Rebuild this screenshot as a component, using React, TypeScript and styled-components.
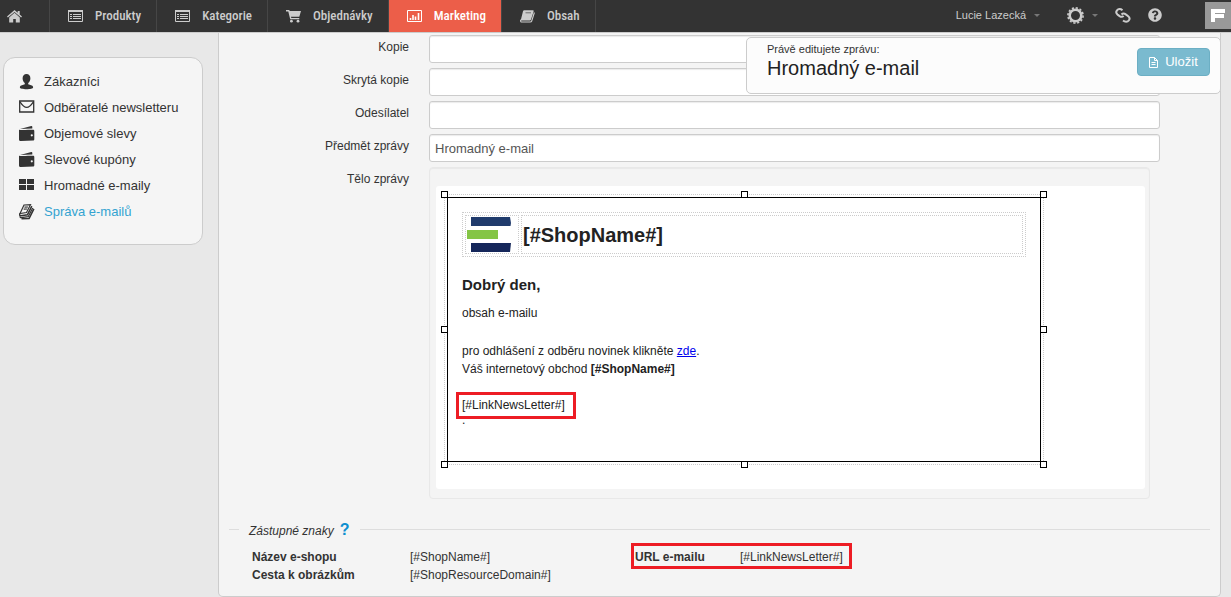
import React from "react";
import styled, { createGlobalStyle, css } from "styled-components";
import { FaQuestionCircle } from "react-icons/fa";

const GlobalStyle = createGlobalStyle`
  *, *::before, *::after { box-sizing: border-box; }
  body {
    margin: 0;
    background: #e8e8e8;
    color: #333;
    font: 12px/18px "Liberation Sans", Arial, sans-serif;
  }
`;

/* ---------- top bar ---------- */

const TopBar = styled.header`
  display: flex;
  height: 33px;
  background: #333;
  border-bottom: 1px solid #ccc;
  color: #ccc;
`;

const Nav = styled.nav`
  display: flex;
`;

const NavLink = styled.a<{ $active?: boolean; $home?: boolean }>`
  display: flex;
  align-items: center;
  gap: 12px;
  padding: ${(p) => (p.$home ? "0 27px 0 7px" : "0 15px 0 18px")};
  border-right: 1px solid #464646;
  background: ${(p) => (p.$active ? "#ec5e49" : "transparent")};
  color: ${(p) => (p.$active ? "#fff" : "#ccc")};
  font: 500 13px/30px "Roboto Condensed", "Liberation Sans Narrow", "Liberation Sans", sans-serif;
  text-decoration: none;
  white-space: nowrap;
  svg { flex: none; }
`;

const Tools = styled.div`
  display: flex;
  align-items: center;
  margin-left: auto;
  padding-bottom: 2px;
`;

const ToolButton = styled.button<{ $gap: number }>`
  display: flex;
  align-items: center;
  gap: 8px;
  margin: 0 ${(p) => p.$gap}px 0 0;
  padding: 0;
  border: 0;
  background: none;
  color: #ccc;
  font: 11px/18px "Liberation Sans", Arial, sans-serif;
  white-space: nowrap;
`;

const Caret = styled.span`
  border: 3px solid transparent;
  border-top-color: #777;
  border-bottom: 0;
`;

/* ---------- page columns ---------- */

const Columns = styled.div`
  display: flex;
  align-items: stretch;
  padding-right: 10px;
`;

const Sidebar = styled.aside`
  flex: none;
  width: 218px;
  padding: 24px 15px 0 3px;
`;

const SideMenu = styled.ul`
  margin: 0;
  padding: 11px 15px 19px;
  border: 1px solid #ccc;
  border-radius: 12px;
  background: #f5f5f5;
  list-style: none;
`;

const SideLink = styled.a<{ $active?: boolean }>`
  display: flex;
  align-items: center;
  gap: 9px;
  height: 26px;
  color: ${(p) => (p.$active ? "#33a3d1" : "#333")};
  font-size: 13px;
  text-decoration: none;
  white-space: nowrap;
  svg { color: #333; flex: none; }
`;

const Main = styled.main`
  flex: 1;
  min-width: 0;
  padding: 2px 0 12px;
  border: 1px solid #ccc;
  border-top: 0;
  border-radius: 0 0 5px 5px;
  background: #f4f4f4;
`;

/* ---------- form ---------- */

const Row = styled.div`
  display: flex;
  align-items: flex-start;
  gap: 20px;
  margin-bottom: 5px;
  padding-right: 60px;
`;

const Label = styled.label`
  flex: none;
  width: 190px;
  padding-top: 3px;
  text-align: right;
`;

const Input = styled.input`
  flex: 1;
  min-width: 0;
  height: 28px;
  padding: 0 5px;
  border: 1px solid #ccc;
  border-radius: 3px;
  background: #fff;
  box-shadow: inset 0 1px 1px rgba(0, 0, 0, 0.08);
  color: #555;
  font: 13px/18px "Liberation Sans", Arial, sans-serif;
`;

const Editor = styled.div`
  flex: 1;
  min-width: 0;
  margin-right: 10px;
  padding: 18px 4px 9px 6px;
  border: 1px solid #e8e8e8;
  border-radius: 4px;
  box-shadow: inset 0 1px 1px rgba(0, 0, 0, 0.05);
`;

const Canvas = styled.div`
  padding: 8px 8px 24px;
  border-radius: 3px;
  background: #fff;
`;

const Selection = styled.div`
  position: relative;
  width: 600px;
  padding: 2px;
  border: 1px dotted #ccc;
`;

const HandleLayer = styled.div`
  position: absolute;
  inset: -1px 0 0 -1px;
  pointer-events: none;
`;

const Handle = styled.i<{ $x: number; $y: number }>`
  position: absolute;
  left: ${(p) => p.$x}%;
  top: ${(p) => p.$y}%;
  width: 7px;
  height: 7px;
  margin: -3px 0 0 -3px;
  border: 1px solid #000;
  background: #fff;
`;

const Mail = styled.article`
  padding: 14px 14px 35px;
  border: 1px solid #000;
  color: #222;
`;

const MailHeader = styled.header`
  display: grid;
  grid-template-columns: 54px 1fr;
  gap: 2px;
  padding: 2px;
  border: 1px dotted #ccc;
`;

const MailCell = styled.div`
  display: flex;
  align-items: center;
  height: 39px;
  padding: 1px;
  border: 1px dotted #ccc;
  svg { display: block; }
`;

const ShopName = styled.h1`
  margin: 0;
  font-size: 20px;
  line-height: 32px;
`;

const Greeting = styled.h2`
  margin: 19px 0 10px;
  font-size: 15px;
  line-height: 18px;
`;

const Para = styled.p`
  margin: 0 0 20px;
`;

const Footer = styled(Para)`
  margin-bottom: 0;
`;

const Tail = styled(Footer)`
  line-height: 12px;
`;

const MailLink = styled.a`
  color: #00e;
`;

const frame = css`
  content: "";
  position: absolute;
  border: 3px solid #ed1c24;
`;

const Marked = styled.span`
  position: relative;
  display: inline-block;
  &::after { ${frame} inset: -4px -11px -5px -6px; }
`;

/* ---------- placeholders ---------- */

const Placeholders = styled.fieldset`
  margin: 20px 10px 0;
  padding: 8px 0 0 23px;
  border: 0;
  border-top: 1px solid #ddd;
`;

const Legend = styled.legend`
  margin-left: -13px;
  padding: 3px 10px 0;
  font-style: italic;
`;

const Help = styled.button`
  margin: 0 0 0 6px;
  padding: 0;
  border: 0;
  background: none;
  color: #0d8ecf;
  font: bold 16px/16px "Liberation Sans", Arial, sans-serif;
`;

const Table = styled.table`
  width: 100%;
  table-layout: fixed;
  border-collapse: collapse;
  text-align: left;
  th, td { padding: 0; }
`;

const Col = styled.col<{ $w?: number }>`
  width: ${(p) => (p.$w ? `${p.$w}px` : "auto")};
`;

const MarkedHead = styled.th`
  position: relative;
  &::after { ${frame} left: -4px; top: -5px; width: 221px; height: 26px; }
`;

/* ---------- floating save panel ---------- */

const SavePanel = styled.section`
  position: absolute;
  top: 37px;
  right: 10px;
  width: 475px;
  height: 57px;
  display: flex;
  align-items: flex-start;
  justify-content: space-between;
  padding: 2px 10px 0 20px;
  border: 1px solid #ccc;
  border-radius: 5px;
  background: #fcfcfc;
`;

const Editing = styled.div`
  font-size: 11px;
`;

const EditingTitle = styled.div`
  color: #222;
  font-size: 20px;
  line-height: 20px;
`;

const SaveButton = styled.button`
  display: flex;
  align-items: center;
  justify-content: center;
  gap: 7px;
  width: 73px;
  height: 28px;
  margin-top: 8px;
  padding: 0;
  border: 1px solid #6cafc4;
  border-radius: 4px;
  background: #7abacf;
  color: #fff;
  font: 13px/18px "Liberation Sans", Arial, sans-serif;
`;

/* ---------- icons ---------- */

const HomeIcon = () => (
  <svg width="15" height="13" viewBox="0 0 15 13" fill="currentColor">
    <path d="M7.5 0 0 6.6l.9 1L7.5 2l6.6 5.6.9-1-2.3-2V1h-2v1.8z" />
    <path d="M7.5 2.8 2.2 7.4V12.5h4V9h2.6v3.5h4V7.4z" />
  </svg>
);

const ListIcon = () => (
  <svg width="15" height="13" viewBox="0 0 15 13" fill="none" stroke="currentColor">
    <path d="M.5.5h14v11H.5z" />
    <path d="M0 1h15" strokeWidth="2" />
    <path d="M2 4.5h2M5 4.5h8M2 6.5h2M5 6.5h8M2 8.5h2M5 8.5h8" />
  </svg>
);

const CartIcon = () => (
  <svg width="15" height="13" viewBox="0 0 15 13" fill="currentColor">
    <path d="M0 0h3.3l.4 1H15L13.3 6.8H5l.3 1.2h8v1.2H4.2L2.3 1.5H0z" />
    <circle cx="5.4" cy="11.2" r="1.4" />
    <circle cx="12" cy="11.2" r="1.4" />
  </svg>
);

const ChartIcon = () => (
  <svg width="15" height="13" viewBox="0 0 15 13" fill="none" stroke="currentColor">
    <path d="M.5.5h14v11H.5z" />
    <path d="M3.5 10V8M6 10V5M8.5 10V6.5M11.5 10V3" strokeWidth="1.6" />
  </svg>
);

const BookIcon = () => (
  <svg width="15" height="13" viewBox="0 0 15 13" fill="none">
    <path
      d="M4.2.3h8.6c.7 0 1 .5.8 1.1L11 9.4c-.2.6-.7 1-1.3 1H.7L3 1.2C3.2.6 3.6.3 4.2.3z"
      fill="currentColor"
    />
    <path d="M.8 9.8c-.5 1.3 0 2.2 1 2.2h8.4c.8 0 1.3-.4 1.5-1l2.7-8.5" stroke="currentColor" strokeWidth="1.1" />
    <path d="M5.5 2.8H11" stroke="#555" strokeWidth=".8" />
  </svg>
);

const GearIcon = () => (
  <svg width="17" height="17" viewBox="0 0 17 17" fill="none" stroke="currentColor">
    <circle cx="8.5" cy="8.5" r="5.8" strokeWidth="2.6" />
    <circle cx="8.5" cy="8.5" r="7.6" strokeWidth="1.6" strokeDasharray="2.2 1.78" />
  </svg>
);

const ChainIcon = () => (
  <svg width="16" height="15" viewBox="0 0 16 15" fill="none" stroke="currentColor" strokeWidth="2">
    <path d="M7.5 2.3C5.5.6 3.2.8 2 2.3c-1.2 1.6-.8 3.2.6 4.3l2 1.5c1.5 1 3 .8 4-.3" />
    <path d="M8 12.5c2 1.7 4.6 1.6 5.8 0 1.2-1.6.8-3.2-.6-4.3l-2.4-1.8C9.3 5.2 7.5 5.4 6.5 6.5" />
  </svg>
);

const BrandMark = styled.svg`
  align-self: flex-start;
  margin-top: 2px;
  background: #999;
`;

const UserIcon = () => (
  <svg width="16" height="16" viewBox="0 0 16 16" fill="currentColor">
    <path d="M7.5 0c2.4 0 3.9 1.7 3.9 4.2 0 2-.9 3.8-2.2 4.8v1.2l3.6 1.4c.9.4 1.3 1 1.3 2 0 1.2-3 1.7-6.6 1.7s-6.6-.5-6.6-1.7c0-1 .4-1.6 1.3-2l3.6-1.4V9C4.5 8 3.6 6.2 3.6 4.2 3.6 1.7 5.1 0 7.5 0z" />
  </svg>
);

const MailIcon = () => (
  <svg width="16" height="16" viewBox="0 0 16 16" fill="none" stroke="currentColor" strokeWidth="1.3">
    <path d="M.7 1h14v11H.7z" />
    <path d="M1 1.8c2 3 4.5 5.5 6.7 5.5s4.7-2.5 6.7-5.5" />
  </svg>
);

const WalletIcon = () => (
  <svg width="16" height="16" viewBox="0 0 16 16" fill="currentColor">
    <path d="M1 3 12.3.1c.6-.1 1 .1 1 .8v1.6z" />
    <path
      fillRule="evenodd"
      d="M0 3.8c3 .4 9 0 14 0 .9 0 1.3.4 1.3 1.2v8.2c0 .9-.5 1.3-1.3 1.3L2 15.1c-1.2 0-2-.6-2-1.6zM12.8 8.2a1.1 1.1 0 1 0 0 2.2 1.1 1.1 0 0 0 0-2.2z"
    />
  </svg>
);

const GridIcon = () => (
  <svg width="16" height="16" viewBox="0 0 16 16" fill="currentColor">
    <path d="M0 1h7v5H0zM8 1h7v5H8zM0 7h7v5H0zM8 7h7v5H8z" />
  </svg>
);

const BooksIcon = () => (
  <svg width="16" height="16" viewBox="0 0 16 16" fill="none" stroke="currentColor" strokeWidth="1.2">
    <path d="M5 1 11.5.7 7.5 8.5 1 9.5z" />
    <path d="M5.5 3.2 9 3M4.7 5.2 8.2 5" />
    <path d="M.8 9.5c-.5 1.5 0 2.3 1 2.2l6.7-1L12.8 2.2" strokeWidth="1.5" />
    <path d="M1 12.2c0 1 .5 1.6 1.3 1.5l6.9-1 4.5-8.8" />
    <path d="M2.5 14.8l7.6-.4L14.9 4.8" strokeWidth="1.5" />
  </svg>
);

const FileIcon = () => (
  <svg width="9" height="11" viewBox="0 0 9 11" fill="none" stroke="currentColor">
    <path d="M.5.5h5l3 3v7h-8zM5.5.5v3h3M2.5 5.5h4M2.5 7.5h4" />
  </svg>
);

const ShopLogo = () => (
  <svg width="45" height="35" viewBox="0 0 45 35">
    <path d="M4 0h39l1 6-.5 3H4z" fill="#203b6c" />
    <path d="M0 13h31v9H0z" fill="#84c546" />
    <path d="M4 26h40l-1 9H4z" fill="#15275a" />
  </svg>
);

/* ---------- data ---------- */

const navItems = [
  { text: "Produkty", Icon: ListIcon },
  { text: "Kategorie", Icon: ListIcon },
  { text: "Objednávky", Icon: CartIcon },
  { text: "Marketing", Icon: ChartIcon, active: true },
  { text: "Obsah", Icon: BookIcon },
];

const sideItems = [
  { text: "Zákazníci", Icon: UserIcon },
  { text: "Odběratelé newsletteru", Icon: MailIcon },
  { text: "Objemové slevy", Icon: WalletIcon },
  { text: "Slevové kupóny", Icon: WalletIcon },
  { text: "Hromadné e-maily", Icon: GridIcon },
  { text: "Správa e-mailů", Icon: BooksIcon, active: true },
];

const fields = [
  { id: "cc", label: "Kopie", value: "" },
  { id: "bcc", label: "Skrytá kopie", value: "" },
  { id: "sender", label: "Odesílatel", value: "" },
  { id: "subject", label: "Předmět zprávy", value: "Hromadný e-mail" },
];

const handles: [number, number][] = [
  [0, 0], [50, 0], [100, 0], [0, 50], [100, 50], [0, 100], [50, 100], [100, 100],
];

export default function App() {
  return (
    <>
      <GlobalStyle />
      <TopBar>
        <Nav>
          <NavLink href="#" $home aria-label="Domů"><HomeIcon /></NavLink>
          {navItems.map(({ text, Icon, active }) => (
            <NavLink href="#" key={text} $active={active}><Icon />{text}</NavLink>
          ))}
        </Nav>
        <Tools>
          <ToolButton $gap={27}>Lucie Lazecká<Caret /></ToolButton>
          <ToolButton $gap={17} aria-label="Nastavení"><GearIcon /><Caret /></ToolButton>
          <ToolButton $gap={17} aria-label="Odkaz"><ChainIcon /></ToolButton>
          <ToolButton $gap={43} aria-label="Nápověda"><FaQuestionCircle size={14} /></ToolButton>
          <BrandMark width="26" height="27" viewBox="0 0 26 27">
            <path d="M6 7h14v4H10v1h9v4h-9v4H6z" fill="#fff" />
            <path d="M10 11.5h10" stroke="#999" />
          </BrandMark>
        </Tools>
      </TopBar>

      <Columns>
        <Sidebar>
          <SideMenu>
            {sideItems.map(({ text, Icon, active }) => (
              <li key={text}>
                <SideLink href="#" $active={active}><Icon />{text}</SideLink>
              </li>
            ))}
          </SideMenu>
        </Sidebar>

        <Main>
          {fields.map((f) => (
            <Row key={f.id}>
              <Label htmlFor={f.id}>{f.label}</Label>
              <Input id={f.id} type="text" defaultValue={f.value} />
            </Row>
          ))}
          <Row>
            <Label as="span" id="body-label">Tělo zprávy</Label>
            <Editor role="group" aria-labelledby="body-label">
              <Canvas>
                <Selection>
                  <Mail>
                    <MailHeader>
                      <MailCell><ShopLogo /></MailCell>
                      <MailCell><ShopName>[#ShopName#]</ShopName></MailCell>
                    </MailHeader>
                    <Greeting>Dobrý den,</Greeting>
                    <Para>obsah e-mailu</Para>
                    <Footer>
                      pro odhlášení z odběru novinek klikněte <MailLink href="#">zde</MailLink>.
                      <br />
                      Váš internetový obchod <b>[#ShopName#]</b>
                      <br />
                      <br />
                      <Marked>[#LinkNewsLetter#]</Marked>
                    </Footer>
                    <Tail>.</Tail>
                  </Mail>
                  <HandleLayer>
                    {handles.map(([x, y]) => (
                      <Handle key={`${x}-${y}`} $x={x} $y={y} />
                    ))}
                  </HandleLayer>
                </Selection>
              </Canvas>
            </Editor>
          </Row>

          <Placeholders>
            <Legend>Zástupné znaky<Help>?</Help></Legend>
            <Table>
              <colgroup>
                <Col $w={158} /><Col $w={225} /><Col $w={105} /><Col />
              </colgroup>
              <tbody>
                <tr>
                  <th scope="row">Název e-shopu</th>
                  <td>[#ShopName#]</td>
                  <MarkedHead scope="row">URL e-mailu</MarkedHead>
                  <td>[#LinkNewsLetter#]</td>
                </tr>
                <tr>
                  <th scope="row">Cesta k obrázkům</th>
                  <td colSpan={3}>[#ShopResourceDomain#]</td>
                </tr>
              </tbody>
            </Table>
          </Placeholders>
        </Main>
      </Columns>

      <SavePanel>
        <Editing>
          Právě editujete zprávu:
          <EditingTitle>Hromadný e-mail</EditingTitle>
        </Editing>
        <SaveButton><FileIcon />Uložit</SaveButton>
      </SavePanel>
    </>
  );
}
